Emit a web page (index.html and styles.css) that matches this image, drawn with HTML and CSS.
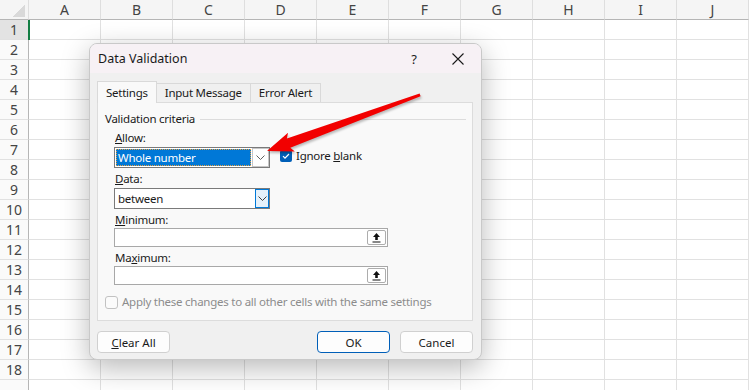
FILE: index.html
```html
<!DOCTYPE html>
<html lang="en">
  <head>
    <meta charset="UTF-8" />
    <title>Data Validation</title>
    <link rel="stylesheet" href="styles.css">
  </head>
  <body>
    <div class="sheet" id="sheet"></div>

    <div class="dialog">
      <div class="dialog-title">
        <span class="title-text">Data Validation</span>
        <span class="help">?</span>
        <svg class="close" width="12" height="12" viewBox="0 0 12 12">
          <path d="M0.5 0.5 L11.5 11.5 M11.5 0.5 L0.5 11.5" stroke="#1a1a1a" stroke-width="1.1" fill="none" />
        </svg>
      </div>

      <div class="dialog-body">
        <div class="tabs">
          <div class="tab active">Settings</div>
          <div class="tab">Input Message</div>
          <div class="tab">Error Alert</div>
        </div>

        <div class="panel">
          <div class="group-title"><span>Validation criteria</span></div>

          <div class="criteria">
            <div class="field-label first"><u>A</u>llow:</div>
            <div class="combo-row">
              <div class="combo">
                <span class="value selected">Whole number</span>
                <span class="drop">
                  <svg width="9" height="5" viewBox="0 0 9 5"><path d="M0.5 0.5 L4.5 4.5 L8.5 0.5" stroke="#606060" fill="none" /></svg>
                </span>
              </div>
              <label class="check">
                <span class="box checked">
                  <svg width="12" height="12" viewBox="0 0 12 12"><path d="M3 6.2 L5 8.2 L9 4" stroke="#fff" stroke-width="1.2" fill="none" /></svg>
                </span>
                <span>Ignore <u>b</u>lank</span>
              </label>
            </div>

            <div class="field-label"><u>D</u>ata:</div>
            <div class="combo">
              <span class="value">between</span>
              <span class="drop hot">
                <svg width="9" height="5" viewBox="0 0 9 5"><path d="M0.5 0.5 L4.5 4.5 L8.5 0.5" stroke="#404040" fill="none" /></svg>
              </span>
            </div>

            <div class="field-label tight"><u>M</u>inimum:</div>
            <div class="ref-input">
              <span class="ref-btn">
                <svg width="11" height="11" viewBox="0 0 11 11"><path d="M5.5 1 L9 5 L6.8 5 L6.8 8 L4.2 8 L4.2 5 L2 5 Z" fill="#111" /><path d="M1.5 10 L9.5 10" stroke="#111" stroke-width="1.2" /></svg>
              </span>
            </div>

            <div class="field-label tight">Ma<u>x</u>imum:</div>
            <div class="ref-input">
              <span class="ref-btn">
                <svg width="11" height="11" viewBox="0 0 11 11"><path d="M5.5 1 L9 5 L6.8 5 L6.8 8 L4.2 8 L4.2 5 L2 5 Z" fill="#111" /><path d="M1.5 10 L9.5 10" stroke="#111" stroke-width="1.2" /></svg>
              </span>
            </div>
          </div>

          <label class="check apply">
            <span class="box"></span>
            <span>Apply these changes to all other cells with the same settings</span>
          </label>
        </div>

        <div class="buttons">
          <button class="btn"><u>C</u>lear All</button>
          <span class="spacer"></span>
          <button class="btn default">OK</button>
          <button class="btn">Cancel</button>
        </div>
      </div>
    </div>

    <svg class="arrow" width="750" height="390" viewBox="0 0 750 390">
      <polygon points="267,151 288,132.7 286.9,138.4 419.6,93.5 420.6,96.3 290.3,147.8 294.8,151.5" fill="#f20000" />
    </svg>

    <script>
      const sheet = document.getElementById('sheet');
      const columns = ['A', 'B', 'C', 'D', 'E', 'F', 'G', 'H', 'I', 'J'];

      const addCell = (className, text) => {
        const el = document.createElement('div');
        el.className = className;
        if (text !== undefined) el.textContent = text;
        sheet.appendChild(el);
      };

      addCell('corner');
      columns.forEach((c) => addCell('col-head', c));

      // the last row is only half visible at the bottom edge
      for (let row = 1; row <= 18; row++) {
        addCell(row === 1 ? 'row-head current' : 'row-head', row);
        columns.forEach((c, i) => addCell(row === 1 && i === 0 ? 'cell active' : 'cell'));
      }
    </script>
  </body>
</html>
```

FILE: styles.css
```css
* {
  margin: 0;
  padding: 0;
  box-sizing: border-box;
}

body {
  width: 750px;
  height: 390px;
  overflow: hidden;
  background: #fff;
  font-family: "Noto Sans", sans-serif;
  position: relative;
}

/* spreadsheet */

.sheet {
  display: grid;
  grid-template-columns: 29px repeat(10, 72px);
  grid-auto-rows: 20px;
  height: 390px;
  background:
    linear-gradient(#fafafa, #fafafa) 0 380px / 28px 10px no-repeat,
    linear-gradient(#b5b5b5, #b5b5b5) 28px 380px / 1px 10px no-repeat,
    repeating-linear-gradient(90deg, transparent 0 71px, #e1e1e1 71px 72px) 29px 380px / 720px 10px no-repeat;
}

.sheet > div {
  border-right: 1px solid #e1e1e1;
  border-bottom: 1px solid #e1e1e1;
}

.corner,
.col-head,
.row-head {
  background: #f5f5f5;
  color: #444;
  font-size: 14px;
  display: flex;
  align-items: center;
  justify-content: center;
}

.corner {
  align-items: flex-end;
  justify-content: flex-end;
  padding: 0 3px 2px 0;
}

.corner::after {
  content: '';
  width: 12px;
  height: 12px;
  background: linear-gradient(135deg, transparent 50%, #d9d9d9 50%);
}

.sheet .col-head,
.sheet .corner {
  border-bottom-color: #b5b5b5;
  border-right-color: #dedede;
}

.sheet .row-head {
  border-right-color: #b5b5b5;
  background: #fafafa;
}

.sheet .row-head.current {
  background: #e3e3e3;
}

.cell.active {
  position: relative;
}

.cell.active::before {
  content: '';
  position: absolute;
  left: -1px;
  top: 0;
  width: 2px;
  height: 20px;
  background: #137e43;
}

/* dialog */

.dialog {
  position: absolute;
  left: 89px;
  top: 43px;
  width: 393px;
  height: 317px;
  background: #f0f0f0;
  border: 1px solid #c9c9c9;
  border-radius: 8px;
  box-shadow: 0 8px 28px rgba(0, 0, 0, 0.28);
  font-size: 11.5px;
  letter-spacing: -0.25px;
  color: #1a1a1a;
  overflow: hidden;
}

.dialog-title {
  height: 29px;
  background: #f7f1f5;
  display: flex;
  align-items: center;
  padding-left: 8px;
  font-size: 12.5px;
  letter-spacing: 0;
}

.title-text {
  flex: 1;
}

.help {
  font-size: 13px;
  margin-right: 35px;
}

.close {
  margin-right: 17px;
}

.dialog-body {
  padding: 8px 8px 0 7px;
}

.tabs {
  display: flex;
  align-items: flex-end;
  height: 21px;
}

.tab {
  height: 19px;
  padding: 0 8px;
  line-height: 18px;
  border: 1px solid #d9d9d9;
  border-bottom: none;
  background: #f0f0f0;
  margin-right: -1px;
}

.tab.active {
  height: 22px;
  margin-bottom: -1px;
  background: #f9f9f9;
  position: relative;
  z-index: 1;
  padding: 2px 8px 0 8px;
}

.panel {
  height: 219px;
  background: #f9f9f9;
  border: 1px solid #dcdcdc;
  padding: 9px 0 0 7px;
}

.group-title {
  display: flex;
  align-items: center;
  line-height: 14px;
  margin-right: 6px;
}

.group-title::after {
  content: '';
  flex: 1;
  height: 1px;
  background: #dcdcdc;
  margin-left: 5px;
}

.criteria {
  padding-left: 9px;
}

.field-label {
  line-height: 14px;
  padding-left: 1px;
  margin-top: 4px;
  margin-bottom: 2px;
}

.field-label.first {
  margin-top: 5px;
}

.field-label.tight {
  margin-top: 4px;
  margin-bottom: 1px;
}

.combo-row {
  display: flex;
  align-items: center;
}

.combo {
  width: 156px;
  height: 21px;
  border: 1px solid #7a7a7a;
  background: #fff;
  display: flex;
  padding: 1px;
}

.combo .value {
  flex: 1;
  line-height: 17px;
  padding-left: 2px;
}

.combo .value.selected {
  background: #0078d7;
  color: #fff;
  outline: 1px dotted #e8a040;
  outline-offset: -1px;
}

.drop {
  width: 17px;
  border: 1px solid #c6c6c6;
  margin: -1px -1px -1px 1px;
  background: #fff;
  display: flex;
  align-items: center;
  justify-content: center;
}

.drop.hot {
  width: 14px;
  background: #e5f1fb;
  border-color: #0078d7;
}

.check {
  display: flex;
  align-items: center;
  line-height: 14px;
}

.combo-row .check {
  margin-left: 10px;
  margin-top: -3px;
}

.box {
  width: 12px;
  height: 12px;
  border-radius: 2px;
  margin-right: 4px;
  display: flex;
}

.box.checked {
  background: #005fb8;
}

.ref-input {
  width: 274px;
  height: 19px;
  border: 1px solid #a8a8a8;
  background: #fff;
  display: flex;
  justify-content: flex-end;
  padding: 1px;
}

.ref-btn {
  width: 19px;
  border: 1px solid #adadad;
  border-radius: 2px;
  display: flex;
  align-items: center;
  justify-content: center;
}

.check.apply {
  margin-top: 10px;
  color: #8c8c8c;
}

.check.apply .box {
  width: 13px;
  height: 13px;
  border: 1px solid #c2c2c2;
  border-radius: 3px;
  background: #fbfbfb;
}

.buttons {
  display: flex;
  margin-top: 10px;
}

.spacer {
  flex: 1;
}

.btn {
  width: 73px;
  height: 22px;
  font: inherit;
  color: #1a1a1a;
  background: #fdfdfd;
  border: 1px solid #d0d0d0;
  border-radius: 4px;
}

.btn.default {
  border-color: #005fb8;
  margin-right: 10px;
}

.arrow {
  position: absolute;
  left: 0;
  top: 0;
  pointer-events: none;
  filter: drop-shadow(1px 2px 1px rgba(0, 0, 0, 0.25));
}
```
